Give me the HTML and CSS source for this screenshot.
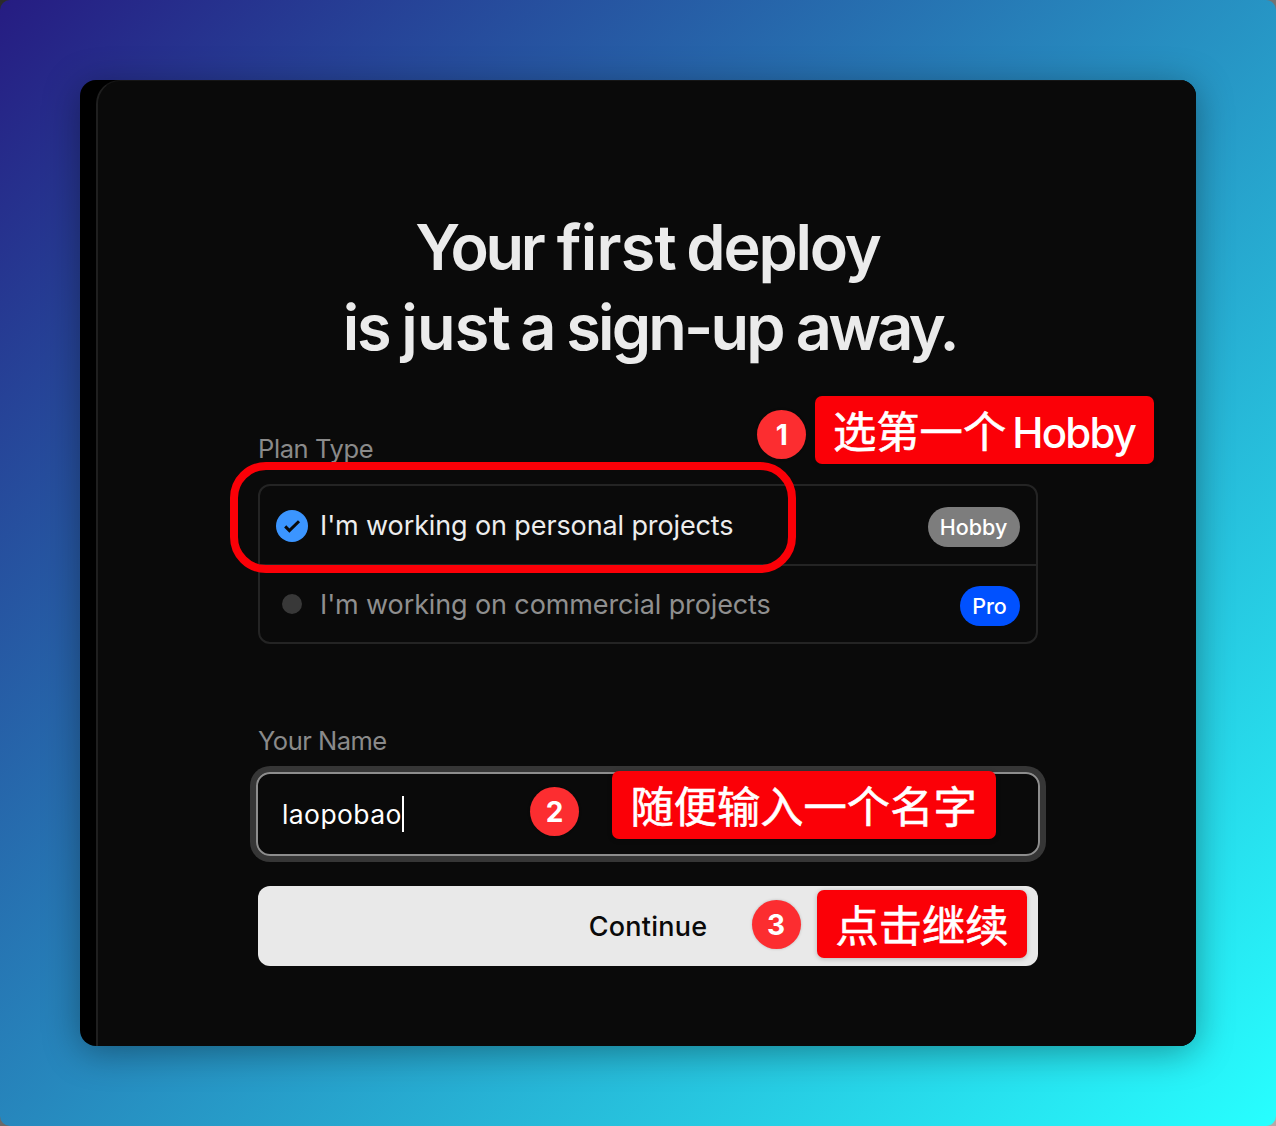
FILE: index.html
```html
<!DOCTYPE html>
<html lang="zh-CN">
<head>
<meta charset="utf-8">
<title>Sign up</title>
<link rel="stylesheet" href="styles.css">
</head>
<body>
<div class="backdrop">
  <main class="window">
    <div class="panel">
      <form class="signup">
        <h1 class="title"><span class="your">Your</span> <span class="loose">first</span> <span class="medium deploy">deploy</span><br><span class="medium">is</span> <span class="loose">just</span> <span class="medium">a</span> <span class="sign-up">sign-up</span> <span class="away">away.</span></h1>
        <div class="label label-plan"><span>Plan Type</span></div>
        <div class="plans">
          <div class="plan plan-selected">
            <svg class="radio" viewBox="0 0 32 32"><circle cx="16" cy="16" r="16" fill="#3b95ff"/><path d="M9.2 16.4l4.2 4.2L23 11.2" fill="none" stroke="#0a0a0a" stroke-width="3"/></svg>
            <span class="plan-name name-personal">I'm working on personal projects</span>
            <span class="badge badge-hobby">Hobby</span>
          </div>
          <div class="plan">
            <svg class="radio" viewBox="0 0 32 32"><circle cx="16" cy="16" r="10" fill="#383838"/></svg>
            <span class="plan-name name-commercial">I'm working on commercial projects</span>
            <span class="badge badge-pro">Pro</span>
          </div>
        </div>
        <div class="label label-name"><span>Your Name</span></div>
        <div class="field"><span class="value">laopobao</span><span class="caret"></span></div>
        <div class="button"><span>Continue</span></div>
      </form>
    </div>
  </main>
  <div class="outline"></div>
  <span class="step step-1">1</span>
  <span class="step step-2">2</span>
  <span class="step step-3">3</span>
  <div class="note note-1"><span>选第一个</span><span class="note-latin">Hobby</span></div>
  <div class="note note-2">随便输入一个名字</div>
  <div class="note note-3">点击继续</div>
</div>
</body>
</html>
```
FILE: styles.css
```css
* { box-sizing: border-box; }
html { background: linear-gradient(135deg, #2b2b2b, #6e6e6e 50%, #b5a9a9); }
body { margin: 0; font-family: Inter, "Noto Sans CJK SC", sans-serif; }

.backdrop {
  position: relative;
  width: 1276px;
  height: 1126px;
  padding: 80px;
  border-radius: 10px;
  background: linear-gradient(135deg, #261c82 0%, #27ffff 100%);
  overflow: hidden;
}
.window {
  height: 966px;
  padding-left: 16px;
  border-radius: 16px;
  background: #000;
  overflow: hidden;
  box-shadow: 0 6px 36px rgba(0, 0, 0, .36);
}
.panel {
  height: 1000px;
  border-left: 2px solid #1f1f1f;
  border-top: 1px solid #161616;
  border-top-left-radius: 24px;
  background: #0a0a0a;
  padding: 126px 158px 0 160px;
}
.signup { width: 780px; display: flex; flex-direction: column; }
.title {
  margin: 0;
  text-align: center;
  font-size: 63px;
  line-height: 80px;
  font-weight: 600;
  letter-spacing: -3px;
  color: #ebebeb;
  white-space: nowrap;
}
.title .your { letter-spacing: -3.4px; margin-right: 1.5px; }
.title .loose { letter-spacing: -.8px; margin-right: -2.5px; }
.title .medium { letter-spacing: -2.2px; margin-right: -1px; }
.title .deploy { margin-right: 1px; }
.title .sign-up { letter-spacing: -2.8px; }
.title .away { letter-spacing: -3.7px; margin-right: -2.5px; }

.label { height: 36px; line-height: 36px; font-size: 25.5px; letter-spacing: -.4px; color: #8a8a8a; }
.label-plan { margin-top: 64px; }
.label-name { margin-top: 79px; letter-spacing: -.5px; }

.plans {
  height: 160px;
  margin-top: 17px;
  border: 2px solid #242424;
  border-radius: 12px;
}
.plan { display: flex; align-items: center; height: 76px; padding: 0 16px; }
.plan-selected { height: 80px; border-bottom: 2px solid #242424; }
.radio { width: 32px; height: 32px; margin-right: 12px; }
.plan-selected .radio { margin-top: 2px; }
.plan-name { font-size: 27px; letter-spacing: -.12px; color: #8f8f8f; white-space: nowrap; }
.name-personal { color: #ededed; }
.badge {
  height: 40px;
  margin-left: auto;
  margin-top: 3px;
  border-radius: 20px;
  font-size: 21.5px;
  line-height: 41px;
  font-weight: 500;
  color: #fff;
  text-align: center;
}
.badge-hobby { width: 92px; padding-right: 1px; background: #7d7d7d; }
.badge-pro { width: 60px; padding-right: 1px; background: #0051ff; }

.field {
  display: flex;
  align-items: center;
  height: 84px;
  margin: 13px -2px 0;
  padding-left: 24px;
  border: 2px solid #8d8d8d;
  border-radius: 14px;
  box-shadow: 0 0 0 6px #363636;
  font-size: 26.5px;
  letter-spacing: .4px;
  color: #fff;
}
.caret { width: 2px; height: 36px; background: #fff; }
.button {
  height: 80px;
  margin-top: 30px;
  border-radius: 12px;
  background: #e9e9e9;
  color: #0a0a0a;
  font-size: 27px;
  font-weight: 500;
  letter-spacing: .25px;
  line-height: 81px;
  text-align: center;
}

/* Tutorial annotations laid over the form */
.outline {
  position: absolute;
  left: 230px;
  top: 462px;
  width: 566px;
  height: 111px;
  border: 8px solid #fb0007;
  border-radius: 36px;
}
.step {
  position: absolute;
  width: 49px;
  height: 49px;
  border-radius: 50%;
  background: #fc2d30;
  color: #fff;
  font-size: 28px;
  font-weight: 700;
  line-height: 50px;
  text-align: center;
  box-shadow: 0 0 3px rgba(0, 0, 0, .2);
}
.step-1 { left: 757.4px; top: 410px; }
.step-2 { left: 530px; top: 787px; }
.step-3 { left: 751.5px; top: 900px; }
.note {
  position: absolute;
  height: 68px;
  padding-left: 18px;
  border-radius: 7px;
  background: #fb0007;
  color: #fff;
  font-family: "Noto Sans CJK SC", sans-serif;
  font-size: 43.3px;
  -webkit-text-stroke: .6px #fff;
  line-height: 66px;
  white-space: nowrap;
  box-shadow: 0 1px 5px rgba(0, 0, 0, .22);
}
.note-1 { left: 815px; top: 396px; width: 339px; }
.note-2 { left: 612.4px; top: 771px; width: 384px; }
.note-3 { left: 817.4px; top: 890px; width: 210px; }
.note-latin {
  margin-left: 6px;
  font-family: Inter, sans-serif;
  font-size: 42px;
  font-weight: 500;
  letter-spacing: -1.8px;
  -webkit-text-stroke: 0;
}
```
